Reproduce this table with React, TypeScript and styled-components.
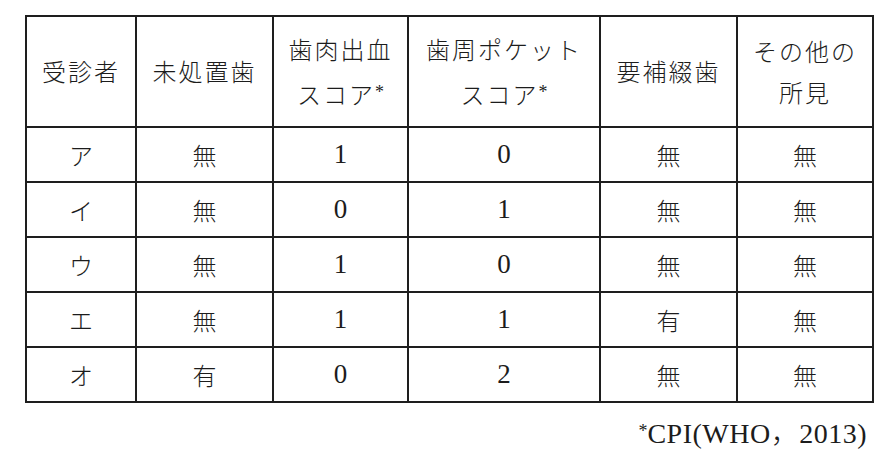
import styled, { createGlobalStyle } from "styled-components";

const GlobalStyle = createGlobalStyle`
  html, body {
    margin: 0;
    padding: 0;
    background: #ffffff;
  }
  body {
    font-family: "Liberation Serif", "Noto Sans CJK JP", serif;
    color: #1c1c1c;
  }
`;

type Row = {
  patient: string;
  untreated: string;
  bleeding: string;
  pocket: string;
  prosthesis: string;
  other: string;
};

const rows: Row[] = [
  { patient: "ア", untreated: "無", bleeding: "1", pocket: "0", prosthesis: "無", other: "無" },
  { patient: "イ", untreated: "無", bleeding: "0", pocket: "1", prosthesis: "無", other: "無" },
  { patient: "ウ", untreated: "無", bleeding: "1", pocket: "0", prosthesis: "無", other: "無" },
  { patient: "エ", untreated: "無", bleeding: "1", pocket: "1", prosthesis: "有", other: "無" },
  { patient: "オ", untreated: "有", bleeding: "0", pocket: "2", prosthesis: "無", other: "無" },
];

const colWidths = [110, 137, 135, 192, 137, 136];

export default function App() {
  return (
    <>
      <GlobalStyle />
      <Page>
        <Sheet>
          <Table>
            <colgroup>
              {colWidths.map((w, i) => (
                <col key={i} style={{ width: w }} />
              ))}
            </colgroup>
            <thead>
              <tr>
                <HeadCell>受診者</HeadCell>
                <HeadCell>未処置歯</HeadCell>
                <HeadCell>
                  歯肉出血
                  <br />
                  スコア<Star>*</Star>
                </HeadCell>
                <HeadCell>
                  歯周ポケット
                  <br />
                  スコア<Star>*</Star>
                </HeadCell>
                <HeadCell>要補綴歯</HeadCell>
                <HeadCell>
                  その他の
                  <br />
                  所見
                </HeadCell>
              </tr>
            </thead>
            <tbody>
              {rows.map((r) => (
                <tr key={r.patient}>
                  <Cell>{r.patient}</Cell>
                  <Cell>{r.untreated}</Cell>
                  <NumCell>{r.bleeding}</NumCell>
                  <NumCell>{r.pocket}</NumCell>
                  <Cell>{r.prosthesis}</Cell>
                  <Cell>{r.other}</Cell>
                </tr>
              ))}
            </tbody>
          </Table>
          <Note>
            <Star>*</Star>CPI(WHO<Wide>，</Wide>2013)
          </Note>
        </Sheet>
      </Page>
    </>
  );
}

const Page = styled.div`
  width: 889px;
  height: 465px;
  padding: 15px 0 0 25px;
  box-sizing: border-box;
`;

const Sheet = styled.div`
  display: flex;
  flex-direction: column;
  width: 848px;
`;

const Table = styled.table`
  border-collapse: collapse;
  table-layout: fixed;
  width: 848px;
  border: 2px solid #1e1e1e;
`;

const HeadCell = styled.th`
  height: 105px;
  padding: 4px 0 0;
  border: 2px solid #1e1e1e;
  font-weight: 300;
  font-size: 24px;
  letter-spacing: 2px;
  line-height: 41px;
  text-align: center;
  vertical-align: middle;
  white-space: nowrap;
`;

const Cell = styled.td`
  height: 53px;
  padding: 0;
  border: 2px solid #1e1e1e;
  font-weight: 300;
  font-size: 24px;
  text-align: center;
  vertical-align: middle;
`;

const NumCell = styled(Cell)`
  font-size: 27px;
  font-family: "Liberation Serif", serif;
  font-weight: 400;
`;

const Star = styled.span`
  font-family: "Liberation Serif", serif;
  font-size: 18px;
  letter-spacing: 0;
  vertical-align: 6px;
  font-weight: 400;
`;

const Wide = styled.span`
  font-family: "Noto Sans CJK JP", sans-serif;
  font-weight: 300;
`;

const Note = styled.div`
  align-self: flex-end;
  margin: 12px 6px 0 0;
  font-size: 28px;
  line-height: 32px;
  letter-spacing: 0.5px;
`;
